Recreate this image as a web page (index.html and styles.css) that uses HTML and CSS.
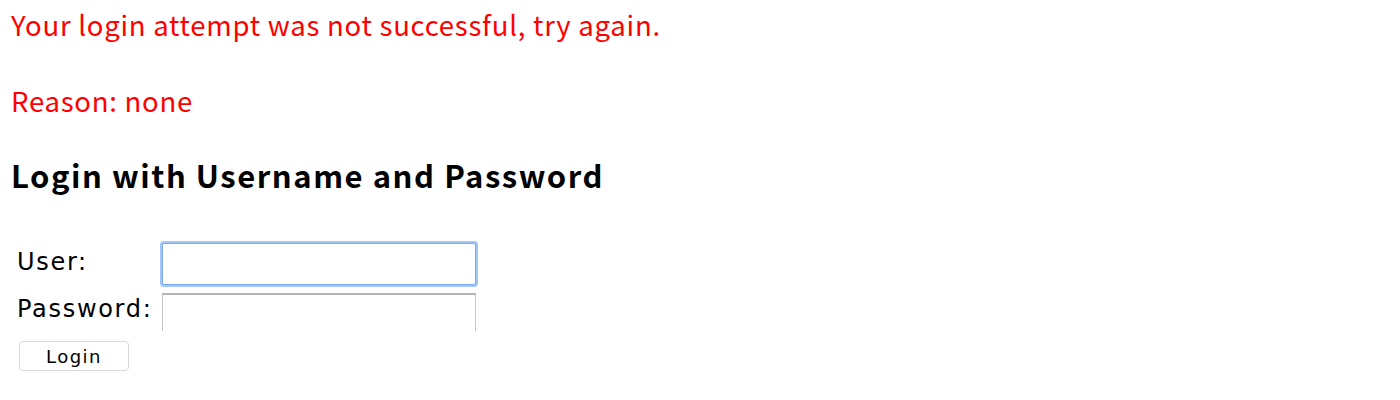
FILE: index.html
```html
<!DOCTYPE html>
<html>
<head>
<meta charset="utf-8">
<title>Login Page</title>
<link rel="stylesheet" href="styles.css">
</head>
<body>
<div class="page">
  <div class="error">Your login attempt was not successful, try again.<br><br>Reason: none</div>
  <h3 class="title">Login with Username and Password</h3>
  <form class="login-form" action="#" method="post">
    <label class="label label-user" for="user">User:</label>
    <input class="field field-user" id="user" type="text" name="j_username" value="">
    <label class="label label-pass" for="pass">Password:</label>
    <input class="field field-pass" id="pass" type="password" name="j_password">
    <div class="actions"><button class="submit" type="submit">Login</button></div>
  </form>
</div>
</body>
</html>
```
FILE: styles.css
```css
html, body {
  margin: 0;
  padding: 0;
  background: #ffffff;
}
.page {
  padding: 5px 0 0 11px;
}
.error {
  font-family: "Noto Sans CJK KR", "Noto Sans", sans-serif;
  font-size: 27.5px;
  line-height: 38px;
  letter-spacing: 0.75px;
  color: #ff0000;
}
.title {
  font-family: "Noto Sans CJK KR", "Noto Sans", sans-serif;
  font-size: 31px;
  line-height: 38px;
  letter-spacing: 1.55px;
  font-weight: bold;
  color: #000;
  margin: 37px 0 0 0;
}
.login-form {
  margin-top: 49px;
  display: grid;
  grid-template-columns: 151px 314px;
  grid-template-rows: 42px 38px auto;
  row-gap: 8px;
  align-items: start;
}
.label {
  font-family: "DejaVu Sans", sans-serif;
  font-size: 24px;
  line-height: 28px;
  letter-spacing: 1.7px;
  color: #000;
  padding-left: 6px;
}
.label-user { padding-top: 5px; }
.label-pass { padding-top: 2px; }
.field {
  box-sizing: border-box;
  width: 314px;
  margin: 0;
  padding: 0 4px;
  background: #fff;
  font-size: 20px;
  outline: none;
}
.field-user {
  height: 42px;
  border: 1px solid #7fa9e4;
  border-radius: 2px;
  box-shadow: 0 0 0 2px #9fc8f8;
}
.field-pass {
  height: 38px;
  border: 1px solid #c6c6c6;
  border-top: 2px solid #b4b4b4;
  border-bottom: 0;
}
.actions {
  grid-column: 1 / 3;
  padding: 2px 0 0 8px;
}
.submit {
  box-sizing: border-box;
  width: 110px;
  height: 30px;
  margin: 0;
  padding: 0;
  background: #ffffff;
  border: 1px solid #d8d8d8;
  border-radius: 4px;
  font-family: "DejaVu Sans", sans-serif;
  font-size: 18px;
  letter-spacing: 1.5px;
  color: #000;
}
```
